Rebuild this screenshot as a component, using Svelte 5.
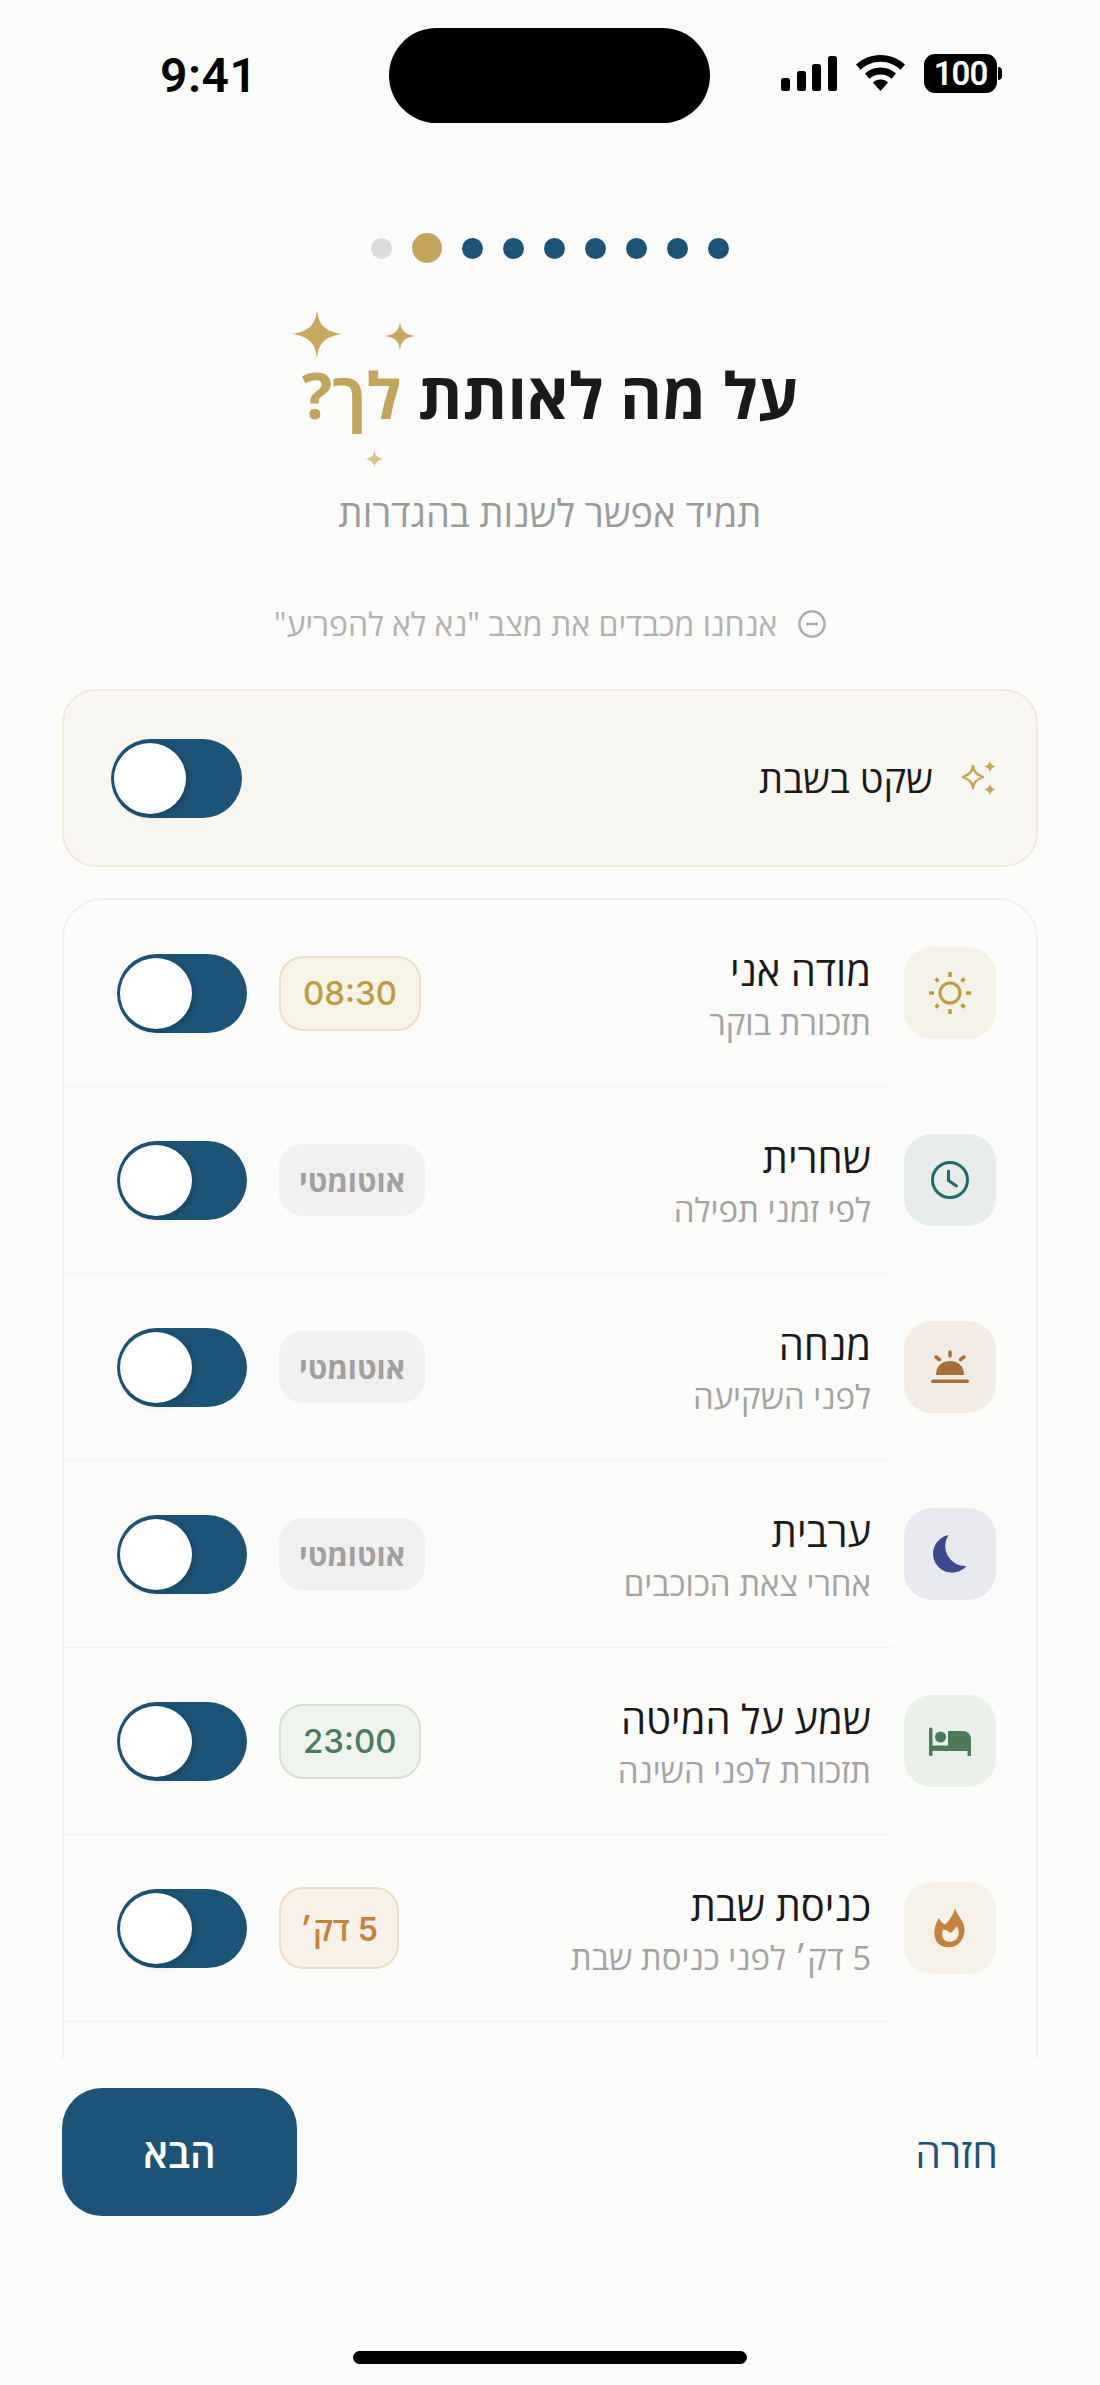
<script>
  const dots = ["done", "active", "todo", "todo", "todo", "todo", "todo", "todo", "todo"];

  const rows = [
    { title: "מודה אני", sub: "תזכורת בוקר", icon: "sun", badge: "08:30", kind: "gold" },
    { title: "שחרית", sub: "לפי זמני תפילה", icon: "clock", badge: "אוטומטי", kind: "auto" },
    { title: "מנחה", sub: "לפני השקיעה", icon: "sunset", badge: "אוטומטי", kind: "auto" },
    { title: "ערבית", sub: "אחרי צאת הכוכבים", icon: "moon", badge: "אוטומטי", kind: "auto" },
    { title: "שמע על המיטה", sub: "תזכורת לפני השינה", icon: "bed", badge: "23:00", kind: "green" },
    { title: "כניסת שבת", sub: "5 דק׳ לפני כניסת שבת", icon: "flame", badge: "5 דק׳", kind: "orange" }
  ];
</script>

<div class="page">
  <div class="status">
    <div class="time">9:41</div>
    <div class="island"></div>
    <div class="indicators">
      <svg width="56" height="35" viewBox="0 0 56 35" fill="#000">
        <rect x="0" y="22" width="9" height="13" rx="2.5" />
        <rect x="16" y="15" width="9" height="20" rx="2.5" />
        <rect x="31" y="8" width="9" height="27" rx="2.5" />
        <rect x="47" y="0" width="9" height="35" rx="2.5" />
      </svg>
      <svg width="49" height="36" viewBox="0 0 49 36" fill="#000">
        <path d="M24.5 0C15 0 6.5 3.6 0 9.6l4.4 5.2C9.8 9.8 16.8 6.8 24.5 6.8s14.7 3 20.1 8l4.4-5.2C42.5 3.6 34 0 24.5 0z" />
        <path d="M24.5 12.5c-6 0-11.4 2.3-15.5 6l4.4 5.2c2.9-2.6 6.8-4.2 11.1-4.2s8.2 1.6 11.1 4.2l4.4-5.2c-4.1-3.7-9.5-6-15.5-6z" />
        <path d="M24.5 24.5c-3 0-5.6 1.1-7.6 2.9l7.6 8.6 7.6-8.6c-2-1.8-4.6-2.9-7.6-2.9z" />
      </svg>
      <div class="battery"><span>100</span></div>
    </div>
  </div>

  <div class="dots">
    {#each dots as d}
      <span class="dot {d}"></span>
    {/each}
  </div>

  <div class="head" dir="rtl">
    <h1>
      על מה לאותת <span class="gold">לך?</span>
      <svg class="spark s1" viewBox="0 0 50 48"><path d="M25 0C27 15 32 21 50 24 32 27 27 33 25 48 23 33 18 27 0 24 18 21 23 15 25 0z" /></svg>
      <svg class="spark s2" viewBox="0 0 50 48"><path d="M25 0C27 15 32 21 50 24 32 27 27 33 25 48 23 33 18 27 0 24 18 21 23 15 25 0z" /></svg>
      <svg class="spark s3" viewBox="0 0 50 48"><path d="M25 0C27 15 32 21 50 24 32 27 27 33 25 48 23 33 18 27 0 24 18 21 23 15 25 0z" /></svg>
    </h1>
    <p class="subtitle">תמיד אפשר לשנות בהגדרות</p>
    <p class="notice">
      <svg width="28" height="28" viewBox="0 0 28 28" fill="none" stroke="#aaa" stroke-width="2.4">
        <circle cx="14" cy="14" r="12.6" />
        <path d="M8 14h12" />
      </svg>
      <span>אנחנו מכבדים את מצב "נא לא להפריע"</span>
    </p>
  </div>

  <div class="quiet" dir="rtl">
    <svg class="quiet-icon" width="36" height="36" viewBox="0 0 36 36" fill="#c4a35a">
      <path d="M13 7C14 13 16 15 23 18 16 21 14 23 13 29 12 23 10 21 3 18 10 15 12 13 13 7z" fill="none" stroke="#c4a35a" stroke-width="2.4" stroke-linejoin="round" transform="translate(-1 -1)" />
      <path d="M29 0C29.6 4 31 5.4 34.5 6.5 31 7.6 29.6 9 29 13 28.4 9 27 7.6 23.500 6.500 27 5.400 28.400 4 29 0z" />
      <path d="M29 23C29.6 27 31 28.400 34.5 29.500 31 30.600 29.600 32 29 36 28.400 32 27 30.600 23.500 29.500 27 28.400 28.400 27 29 23z" />
    </svg>
    <span class="quiet-label">שקט בשבת</span>
    <div class="toggle"><span class="knob"></span></div>
  </div>

  <div class="scroll">
    <div class="list" dir="rtl">
      {#each rows as r}
        <div class="row">
          <div class="icon {r.icon}">
            <svg width="48" height="48" viewBox="0 0 48 48">
              {#if r.icon === "sun"}
                <g fill="none" stroke="#bf9a3f">
                  <circle cx="24" cy="24" r="10" stroke-width="3" />
                  <path d="M24 3v5M24 40v5M3 24h5M40 24h5M9.500 9.500l3 3M35.500 35.500l3 3M9.500 38.500l3-3M35.500 12.500l3-3" stroke-width="3.500" />
                </g>
              {:else if r.icon === "clock"}
                <g fill="none" stroke="#1d6b6b" stroke-width="3" stroke-linecap="round" stroke-linejoin="round">
                  <circle cx="24" cy="24" r="17.500" />
                  <path d="M22.500 15v9.500l8 5.500" />
                </g>
              {:else if r.icon === "sunset"}
                <g fill="#a86f36">
                  <path d="M10 32C10 23 16 18 24 18s14 5 14 14z" />
                  <rect x="5" y="36.500" width="38" height="3.500" rx="1.700" />
                </g>
                <path d="M24 9v4M10 14l3.500 2.500M38 14l-3.500 2.500" fill="none" stroke="#a86f36" stroke-width="3.500" stroke-linecap="round" />
              {:else if r.icon === "moon"}
                <path d="M22.500 5A19 19 0 1 0 40.500 36 20 20 0 0 1 22.500 5z" fill="#3b4a8f" />
              {:else if r.icon === "bed"}
                <g fill="#4a7c59">
                  <rect x="3" y="10.500" width="3.500" height="28.500" rx="1.500" />
                  <circle cx="14.500" cy="20" r="5.500" />
                  <path d="M22 14h15a8 8 0 0 1 8 8v17h-3.500v-5H3v-5.500h19z" />
                </g>
              {:else}
                <path fill="#c4823a" fill-rule="evenodd" d="M29 4C30 9 35 14 37.500 20 40 27 38 36 31 41 27 43.500 21 44 16 42 10 39 7.500 33 8.500 26 9 21 11 17 13 13.500 14 17 16 19.500 19 20.500 23 18 27 11 29 4zM24 29C21 26 19.500 25.500 17 26 15.500 30 16 35 20 37 25 39 31 37 32.500 31 33 28.500 32.500 25 31 22 29 24 27 28 24 29z" />
              {/if}
            </svg>
          </div>
          <div class="text">
            <div class="title">{r.title}</div>
            <div class="sub">{r.sub}</div>
          </div>
          <div class="badge {r.kind}">{r.badge}</div>
          <div class="toggle"><span class="knob"></span></div>
        </div>
        <div class="sep"></div>
      {/each}
    </div>
  </div>

  <div class="footer" dir="rtl">
    <span class="back">חזרה</span>
    <button class="next">הבא</button>
  </div>

  <div class="home"></div>
</div>

<style>
  :global(body) {
    margin: 0;
    background: #fbfbf9;
  }

  .page {
    width: 1100px;
    height: 2385px;
    overflow: hidden;
    background: #fbfbf9;
    font-family: "Open Sans", "Liberation Sans", sans-serif;
    color: #1a1a1a;
  }

  /* status bar */
  .status {
    display: grid;
    grid-template-columns: 389px 321px 1fr;
    align-items: center;
    height: 95px;
    padding-top: 28px;
  }
  .time {
    padding-left: 160px;
    font-family: Roboto, "Liberation Sans", sans-serif;
    font-size: 48px;
    font-weight: 600;
    letter-spacing: 0.5px;
    color: #000;
  }
  .island {
    height: 95px;
    border-radius: 48px;
    background: #000;
  }
  .indicators {
    display: flex;
    align-items: center;
    gap: 19px;
    padding-left: 71px;
    margin-top: -5px;
  }
  .battery {
    position: relative;
    width: 73px;
    height: 39px;
    border-radius: 11px;
    background: #000;
    display: flex;
    align-items: center;
    justify-content: center;
    font-family: Roboto, "Liberation Sans", sans-serif;
    font-size: 33px;
    font-weight: 600;
    letter-spacing: -1px;
    color: #fff;
  }
  .battery::after {
    content: "";
    position: absolute;
    right: -5px;
    top: 13px;
    width: 4px;
    height: 13px;
    border-radius: 0 4px 4px 0;
    background: #000;
  }

  /* progress */
  .dots {
    display: flex;
    justify-content: center;
    align-items: center;
    gap: 20px;
    margin-top: 110px;
    height: 30px;
  }
  .dot {
    width: 21px;
    height: 21px;
    border-radius: 50%;
    background: #1c5478;
  }
  .dot.done { background: #dcdcdc; }
  .dot.active {
    width: 30px;
    height: 30px;
    background: #c4a35a;
  }

  /* heading */
  .head {
    text-align: center;
  }
  h1 {
    position: relative;
    width: fit-content;
    margin: 92px auto 0;
    font-size: 64px;
    line-height: 80px;
    font-weight: 700;
    color: #1a1a1a;
  }
  .gold { color: #c4a35a; }
  .spark {
    position: absolute;
    fill: #c9a85c;
  }
  .s1 { width: 50px; height: 48px; left: -10px; top: -45px; }
  .s2 { width: 30px; height: 30px; left: 83px; top: -34px; }
  .s3 { width: 19px; height: 20px; left: 63px; top: 94px; fill: #d8c08a; }

  .subtitle {
    margin: 55px 0 0;
    font-size: 38px;
    line-height: 44px;
    color: #9a9a9a;
  }
  .notice {
    display: flex;
    justify-content: center;
    align-items: center;
    gap: 21px;
    margin: 70px 0 0;
    font-size: 32px;
    line-height: 40px;
    color: #b2b2b2;
  }

  /* shabbat card */
  .quiet {
    display: flex;
    align-items: center;
    box-sizing: border-box;
    height: 178px;
    margin: 45px 62px 0;
    padding: 0 39px 0 47px;
    border: 2px solid #f0e9d6;
    border-radius: 34px;
    background: #f8f6f0;
  }
  .quiet-label {
    flex: 1;
    margin-right: 28px;
    font-size: 38px;
  }
  .quiet .toggle {
    width: 131px;
    padding-right: 55px;
  }

  /* list */
  .scroll {
    height: 1160px;
    margin-top: 31px;
    overflow: hidden;
  }
  .list {
    margin: 0 62px;
    padding-bottom: 80px;
    border: 2px solid #efefed;
    border-radius: 40px;
  }
  .row {
    display: flex;
    align-items: center;
    height: 186px;
    padding: 0 40px 0 53px;
  }
  .sep {
    height: 1px;
    margin-right: 143px;
    background: #f1f1ee;
  }
  .icon {
    display: flex;
    align-items: center;
    justify-content: center;
    flex: none;
    width: 92px;
    height: 92px;
    border-radius: 28px;
  }
  .icon.sun { background: #f4f1e6; }
  .icon.clock { background: #e5ecea; }
  .icon.sunset { background: #f3ece4; }
  .icon.moon { background: #e8e9ef; }
  .icon.bed { background: #e9efe9; }
  .icon.flame { background: #f5f0e8; }

  .text {
    flex: 1;
    margin-right: 33px;
    padding-top: 4px;
  }
  .title {
    font-size: 40px;
    line-height: 44px;
    color: #1a1a1a;
  }
  .sub {
    margin-top: 12px;
    font-size: 33px;
    line-height: 36px;
    color: #a3a3a3;
  }

  .badge {
    display: flex;
    align-items: center;
    justify-content: center;
    box-sizing: border-box;
    height: 75px;
    margin-left: 32px;
    padding: 0 22px;
    border: 2px solid transparent;
    border-radius: 24px;
    font-size: 33px;
    font-weight: 500;
    font-family: "Inter", "Open Sans", "Liberation Sans", sans-serif;
  }
  .badge.gold {
    background: #f7f3e7;
    border-color: #e9dfc3;
    color: #bf9a3f;
  }
  .badge.auto {
    height: 72px;
    border: 0;
    padding: 0 20px;
    background: #f0f0f0;
    color: #a0a0a0;
    font-size: 30px;
    font-weight: 700;
  }
  .badge.green {
    background: #eef3ee;
    border-color: #d3dfd4;
    color: #4a7c59;
  }
  .badge.orange {
    height: 82px;
    padding: 0 19px;
    background: #f7f1e8;
    border-color: #eddcc5;
    color: #c4823a;
    font-size: 32px;
    font-weight: 600;
  }

  .toggle {
    flex: none;
    display: flex;
    box-sizing: border-box;
    width: 130px;
    height: 79px;
    padding: 4px 54px 4px 3px;
    border-radius: 40px;
    background: #1c5478;
    direction: ltr;
  }
  .knob {
    width: 72px;
    height: 71px;
    border-radius: 50%;
    background: #fff;
    box-shadow: 3px 2px 8px rgba(0, 0, 0, 0.2);
  }

  /* footer */
  .footer {
    display: flex;
    justify-content: space-between;
    align-items: center;
    margin-top: 30px;
    padding: 0 102px 0 62px;
  }
  .back {
    font-size: 41px;
    color: #1c5478;
  }
  .next {
    width: 235px;
    height: 128px;
    border: 0;
    border-radius: 40px;
    background: #1c5478;
    color: #fff;
    font-family: inherit;
    font-size: 40px;
    font-weight: 600;
  }

  .home {
    width: 394px;
    height: 13px;
    margin: 135px auto 0;
    border-radius: 7px;
    background: #000;
  }
</style>
